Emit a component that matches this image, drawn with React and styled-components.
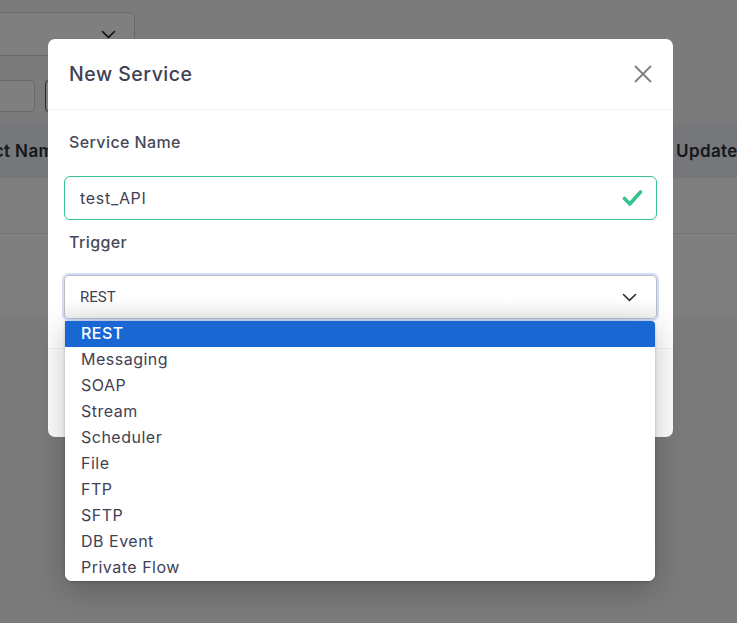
import React from "react";
import styled, { createGlobalStyle } from "styled-components";

const Global = createGlobalStyle`
  html, body { margin: 0; padding: 0; background: #f6f6f6; }
  body { font-family: "Inter", "Open Sans", sans-serif; overflow: hidden; }
  #root { height: 623px; position: relative; overflow: hidden; }
`;

const Page = styled.div`
  padding-top: 12px;
  display: flex;
  flex-direction: column;
`;

const TopSelect = styled.div`
  width: 250px;
  height: 44px;
  box-sizing: border-box;
  margin-left: -115px;
  border: 1px solid #cfd2d8;
  border-radius: 6px;
  background: #fff;
  display: flex;
  align-items: center;
  justify-content: flex-end;
  padding-right: 18px;
  color: #222;
`;

const FilterRow = styled.div`
  margin-top: 24px;
  display: flex;
  gap: 10px;
  margin-left: -65px;
`;

const FilterInput = styled.div`
  width: 100px;
  height: 32px;
  box-sizing: border-box;
  border: 1px solid ${(p) => (p.$accent ? "#3547c8" : "#cfd2d8")};
  border-radius: 4px;
  background: #fff;
`;

const Card = styled.div`
  margin-top: 12px;
  margin-left: -60px;
  width: 900px;
  background: #fff;
`;

const HeaderRow = styled.div`
  display: grid;
  grid-template-columns: 736px auto;
  height: 54px;
  align-items: center;
  background: #eceef6;
  font-family: "Inter", sans-serif;
  font-weight: 600;
  font-size: 17px;
  letter-spacing: 0.4px;
  color: #2a2f3a;
`;

const HeaderCell = styled.div`
  padding-left: ${(p) => p.$pad || 0}px;
  white-space: nowrap;
`;

const TableRow = styled.div`
  height: ${(p) => p.$h}px;
  border-bottom: ${(p) => (p.$line ? "1px solid #e4e6ef" : "none")};
  box-sizing: border-box;
`;

const Overlay = styled.div`
  position: absolute;
  inset: 0;
  background: rgba(0, 0, 0, 0.5);
`;

const Modal = styled.div`
  margin: 39px 0 0 48px;
  width: 625px;
  height: 398px;
  background: #fff;
  border-radius: 7px;
  display: flex;
  flex-direction: column;
`;

const ModalHeader = styled.div`
  height: 71px;
  box-sizing: border-box;
  border-bottom: 1px solid #eff2f5;
  display: flex;
  align-items: center;
  justify-content: space-between;
  padding: 0 20px 0 21px;
`;

const Title = styled.h2`
  margin: 0;
  font-family: "Inter", sans-serif;
  font-size: 19.5px;
  font-weight: 500;
  color: #3f4254;
  letter-spacing: 0.5px;
`;

const CloseBtn = styled.button`
  border: none;
  background: none;
  padding: 0;
  width: 20px;
  height: 20px;
  display: flex;
  align-items: center;
  justify-content: center;
  cursor: pointer;
`;

const ModalBody = styled.div`
  padding: 20px 16px 0 16px;
  display: flex;
  flex-direction: column;
  height: 239px;
  box-sizing: border-box;
  border-bottom: 1px solid #eff2f5;
`;

const Label = styled.label`
  display: block;
  padding-left: 5px;
  font-family: "Inter", sans-serif;
  font-size: 16px;
  font-weight: 500;
  line-height: 24px;
  color: #464a58;
  letter-spacing: 0.4px;
  margin-bottom: ${(p) => p.$mb}px;
`;

const TextField = styled.div`
  height: 44px;
  box-sizing: border-box;
  border: 1px solid #35c48e;
  border-radius: 6px;
  display: flex;
  align-items: center;
  justify-content: space-between;
  padding: 0 13px 0 15px;
  font-family: "Inter", sans-serif;
  font-size: 16px;
  color: #3f4254;
  margin-bottom: 10px;
  letter-spacing: 0.7px;
`;

const SelectWrap = styled.div`
  position: relative;
  margin-top: 1px;
`;

const SelectBox = styled.div`
  height: 44px;
  box-sizing: border-box;
  border: 1px solid #b9bcc4;
  border-radius: 5px;
  box-shadow: 0 0 0 2px #d3dbf8;
  background: linear-gradient(#fff 60%, #f3f3f3);
  display: flex;
  align-items: center;
  justify-content: space-between;
  padding: 0 19px 0 15px;
  font-family: "Roboto", sans-serif;
  font-size: 15px;
  color: #3f4254;
`;

const OptionList = styled.ul`
  position: absolute;
  top: calc(100% + 2px);
  left: 1px;
  right: 2px;
  margin: 0;
  padding: 0;
  list-style: none;
  background: #fff;
  border-radius: 0 4px 7px 7px;
  overflow: hidden;
  box-shadow: 0 8px 34px rgba(0, 0, 0, 0.24), 0 1px 3px rgba(0, 0, 0, 0.2);
  z-index: 5;
`;

const Option = styled.li`
  height: 26px;
  line-height: 25px;
  padding-left: 16px;
  font-family: "Inter", sans-serif;
  font-size: 16px;
  letter-spacing: 0.5px;
  color: ${(p) => (p.$selected ? "#fff" : "#3f4254")};
  background: ${(p) => (p.$selected ? "#1967d2" : "#fff")};
  font-weight: ${(p) => (p.$selected ? 500 : 400)};
`;

const options = [
  "REST",
  "Messaging",
  "SOAP",
  "Stream",
  "Scheduler",
  "File",
  "FTP",
  "SFTP",
  "DB Event",
  "Private Flow",
];

const Chevron = ({ color = "#2b2f36" }) => (
  <svg width="15" height="9" viewBox="0 0 15 9" fill="none">
    <path d="M1.5 1.5 L7.5 7.3 L13.5 1.5" stroke={color} strokeWidth="1.6" strokeLinecap="round" strokeLinejoin="round" />
  </svg>
);

export default function App() {
  return (
    <>
      <Global />
      <Page>
        <TopSelect>
          <Chevron color="#222" />
        </TopSelect>
        <FilterRow>
          <FilterInput />
          <FilterInput $accent />
        </FilterRow>
        <Card>
          <HeaderRow>
            <HeaderCell $pad={3}>Product Name</HeaderCell>
            <HeaderCell>Updated</HeaderCell>
          </HeaderRow>
          <TableRow $h={56} $line />
          <TableRow $h={82} />
        </Card>
      </Page>
      <Overlay>
        <Modal>
          <ModalHeader>
            <Title>New Service</Title>
            <CloseBtn aria-label="close">
              <svg width="18" height="18" viewBox="0 0 18 18">
                <path d="M1 1 L17 17 M17 1 L1 17" stroke="#7e7e7e" strokeWidth="1.8" />
              </svg>
            </CloseBtn>
          </ModalHeader>
          <ModalBody>
            <Label $mb={22}>Service Name</Label>
            <TextField>
              <span>test_API</span>
              <svg width="21" height="18" viewBox="0 0 21 18">
                <path d="M2.5 9.5 L7.8 15 L18.5 3" stroke="#36c28d" strokeWidth="3.6" fill="none" strokeLinecap="round" strokeLinejoin="round" />
              </svg>
            </TextField>
            <Label $mb={20}>Trigger</Label>
            <SelectWrap>
              <SelectBox>
                <span>REST</span>
                <Chevron />
              </SelectBox>
              <OptionList>
                {options.map((o, i) => (
                  <Option key={o} $selected={i === 0}>
                    {o}
                  </Option>
                ))}
              </OptionList>
            </SelectWrap>
          </ModalBody>
        </Modal>
      </Overlay>
    </>
  );
}
